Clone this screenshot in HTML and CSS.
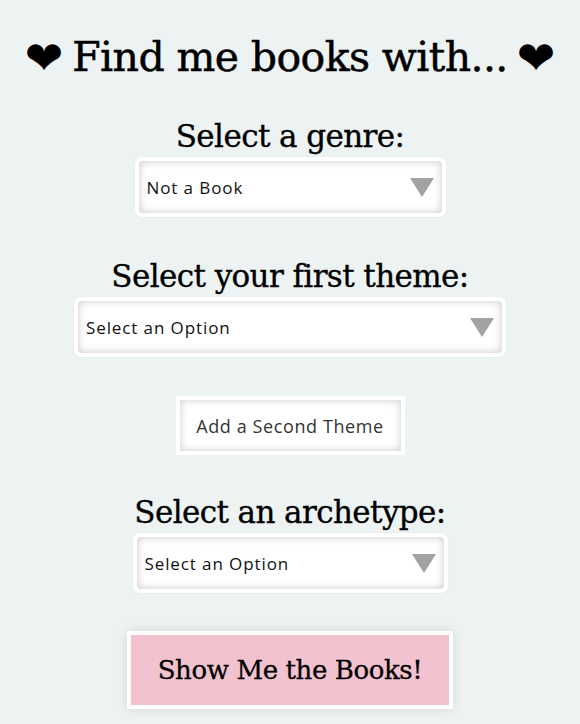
FILE: index.html
```html
<!DOCTYPE html>
<html>
<head>
<meta charset="utf-8">
<link rel="stylesheet" href="styles.css">
</head>
<body>
<main class="page">
  <h1 class="title"><span class="heart">❤</span> Find me books with... <span class="heart">❤</span></h1>

  <section class="field field-genre">
    <label class="label">Select a genre:</label>
    <div class="select select-genre">
      <div class="select-inner">
        <span class="select-text">Not a Book</span>
        <span class="arrow"></span>
      </div>
    </div>
  </section>

  <section class="field field-theme">
    <label class="label">Select your first theme:</label>
    <div class="select select-theme">
      <div class="select-inner">
        <span class="select-text">Select an Option</span>
        <span class="arrow"></span>
      </div>
    </div>
  </section>

  <div class="add-btn">
    <div class="add-inner">Add a Second Theme</div>
  </div>

  <section class="field field-arch">
    <label class="label">Select an archetype:</label>
    <div class="select select-arch">
      <div class="select-inner">
        <span class="select-text">Select an Option</span>
        <span class="arrow"></span>
      </div>
    </div>
  </section>

  <div class="show-btn">Show Me the Books!</div>
</main>
</body>
</html>
```

FILE: styles.css
```css
html, body {
  margin: 0;
  padding: 0;
  background: #edf3f3;
}
body {
  width: 580px;
  height: 724px;
  overflow: hidden;
}
.page {
  display: flex;
  flex-direction: column;
  align-items: center;
  padding-top: 34px;
}
.title {
  margin: 0;
  height: 46px;
  font-family: "DejaVu Serif", serif;
  font-weight: normal;
  font-size: 41px;
  line-height: 46px;
  color: #000;
  display: flex;
  align-items: center;
  gap: 9px;
  letter-spacing: -0.6px;
  -webkit-text-stroke: 0.5px #000;
  white-space: nowrap;
}
.heart {
  font-family: "DejaVu Sans", sans-serif;
  font-size: 46px;
  letter-spacing: 0;
  -webkit-text-stroke: 0;
  position: relative;
  top: 1px;
}
.field {
  display: flex;
  flex-direction: column;
  align-items: center;
}
.field-genre { margin-top: 37px; }
.field-theme { margin-top: 40px; }
.field-arch { margin-top: 38px; }
.label {
  font-family: "DejaVu Serif", serif;
  font-size: 31px;
  line-height: 38px;
  color: #000;
  letter-spacing: -0.6px;
  -webkit-text-stroke: 0.35px #000;
  margin-bottom: 2px;
  white-space: nowrap;
}
.select {
  box-sizing: border-box;
  height: 60px;
  background: #fff;
  border: 4px solid #fff;
  border-radius: 7px;
  box-shadow: 0 0 2px rgba(0,0,0,0.06);
}
.select-genre { width: 311px; }
.select-theme { width: 432px; }
.select-arch { width: 315px; }
.select-inner {
  height: 100%;
  box-sizing: border-box;
  border-radius: 4px;
  box-shadow: inset 0 0 8px rgba(0,0,0,0.22);
  display: flex;
  align-items: center;
  justify-content: space-between;
  padding: 0 8px 0 8px;
}
.select-text {
  font-family: "Open Sans", sans-serif;
  font-size: 17px;
  letter-spacing: 0.9px;
  color: #111;
}
.arrow {
  width: 0;
  height: 0;
  border-left: 12px solid transparent;
  border-right: 12px solid transparent;
  border-top: 19px solid #a2a2a2;
}
.add-btn {
  margin-top: 39px;
  box-sizing: border-box;
  width: 229px;
  height: 59px;
  border: 4px solid #fff;
  background: #fff;
}
.add-inner {
  height: 100%;
  box-shadow: inset 0 0 9px rgba(0,0,0,0.2);
  display: flex;
  align-items: center;
  justify-content: center;
  font-family: "Open Sans", sans-serif;
  font-size: 18px;
  letter-spacing: 0.6px;
  color: #333;
}
.show-btn {
  margin-top: 38px;
  box-sizing: border-box;
  width: 326px;
  height: 78px;
  border: 4px solid #fff;
  background: #f2c2cf;
  box-shadow: 0 0 10px rgba(0,0,0,0.12);
  display: flex;
  align-items: center;
  justify-content: center;
  font-family: "DejaVu Serif", serif;
  font-size: 26px;
  color: #000;
  letter-spacing: -0.4px;
  -webkit-text-stroke: 0.3px #000;
}
```
